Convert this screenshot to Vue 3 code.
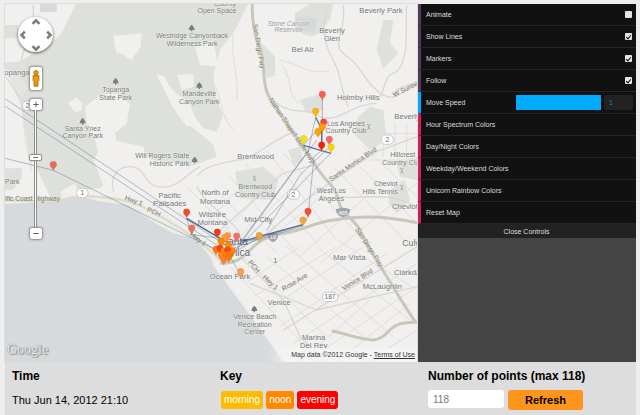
<script setup>
import { ref } from 'vue'

const zoom = ref(12)
const speed = ref(1)
const points = ref('')

const toggles = ref([
  { id: 'animate', label: 'Animate', on: false },
  { id: 'lines', label: 'Show Lines', on: true },
  { id: 'markers', label: 'Markers', on: true },
  { id: 'follow', label: 'Follow', on: true },
])
const actions = [
  'Hour Spectrum Colors',
  'Day/Night Colors',
  'Weekday/Weekend Colors',
  'Unicorn Rainbow Colors',
  'Reset Map',
]
const pans = [
  { dir: 'up', turn: 'M3 8 L7 4 L11 8' },
  { dir: 'left', turn: 'M8 3 L4 7 L8 11' },
  { dir: 'right', turn: 'M6 3 L10 7 L6 11' },
  { dir: 'down', turn: 'M3 6 L7 10 L11 6' },
]
const keys = ['morning', 'noon', 'evening']

const labels = [
  { x: 675, y: 18, lines: ['County'], k: 'park' },
  { x: 651, y: 40, lines: ['Open Space'], k: 'park' },
  { x: 576, y: 114, lines: ['Westridge Canyonback', 'Wilderness Park'], k: 'park' },
  { x: 347, y: 276, lines: ['Topanga', 'State Park'], k: 'park' },
  { x: 598, y: 288, lines: ['Mandeville', 'Canyon Park'], k: 'park' },
  { x: 248, y: 392, lines: ['Santa Ynez', 'Canyon Park'], k: 'park' },
  { x: 568, y: 474, lines: ['Will Rogers State', 'Historic Park'], k: 'park', a: 'end' },
  { x: 15, y: 553, lines: ['Park'], k: 'park', a: 'start' },
  { x: 13, y: 225, lines: ['opanga'], k: 'town', a: 'start' },
  { x: 866, y: 77, lines: ['Stone Canyon', 'Reservoir'], k: 'water-name' },
  { x: 1143, y: 38, lines: ['Beverly Park'], k: 'town' },
  { x: 996, y: 98, lines: ['Beverly', 'Glen'], k: 'town' },
  { x: 908, y: 156, lines: ['Bel Air'], k: 'town' },
  { x: 1075, y: 300, lines: ['Holmby Hills'], k: 'town' },
  { x: 1183, y: 357, lines: ['Beverly Hills'], k: 'town', a: 'start' },
  { x: 1038, y: 377, lines: ['Los Angeles', 'Country Club'], k: 'park' },
  { x: 767, y: 476, lines: ['Brentwood'], k: 'town' },
  { x: 766, y: 567, lines: ['Brentwood', 'Country Club'], k: 'park' },
  { x: 1208, y: 471, lines: ['Hillcrest', 'Country Club'], k: 'park' },
  { x: 1193, y: 558, lines: ['Cheviot', 'Hills Tennis'], k: 'park', a: 'end' },
  { x: 994, y: 580, lines: ['West Los', 'Angeles'], k: 'park' },
  { x: 1176, y: 628, lines: ['Cheviot Hills'], k: 'town', a: 'start' },
  { x: 645, y: 586, lines: ['North of', 'Montana'], k: 'town' },
  { x: 637, y: 650, lines: ['Wilshire', 'Montana'], k: 'town' },
  { x: 509, y: 594, lines: ['Pacific', 'Palisades'], k: 'town' },
  { x: 775, y: 667, lines: ['Mid-City'], k: 'town' },
  { x: 690, y: 838, lines: ['Ocean Park'], k: 'town' },
  { x: 1048, y: 780, lines: ['Mar Vista'], k: 'town' },
  { x: 1207, y: 738, lines: ['Culver City'], k: 'city', a: 'start' },
  { x: 1182, y: 824, lines: ['Clarkdale'], k: 'town', a: 'start' },
  { x: 1147, y: 867, lines: ['McLaughlin'], k: 'town' },
  { x: 837, y: 916, lines: ['Venice'], k: 'town' },
  { x: 764, y: 957, lines: ['Venice Beach', 'Recreation', 'Center'], k: 'park' },
  { x: 941, y: 1019, lines: ['Marina', 'Del Rey'], k: 'town' },
  { x: 704, y: 735, lines: ['Santa'], k: 'metro' },
  { x: 702, y: 768, lines: ['Monica'], k: 'metro' },
]
const step = { park: 23, town: 25, 'water-name': 20 }

const streets = [
  { x: 770, y: 140, r: 80, t: 'San Diego Fwy' },
  { x: 870, y: 395, r: 56, t: 'Nathan Shapell Mem Hwy' },
  { x: 1062, y: 498, r: -34, t: 'Santa Monica Blvd' },
  { x: 1102, y: 745, r: 57, t: 'San Diego Fwy' },
  { x: 1076, y: 844, r: -33, t: 'Venice Blvd' },
  { x: 887, y: 852, r: -31, t: 'Rose Ave' },
  { x: 757, y: 804, r: 50, t: 'PCH' },
  { x: 807, y: 852, r: 42, t: 'Hwy 1' },
  { x: 399, y: 608, r: 20, t: 'Hwy 1' },
  { x: 459, y: 642, r: 24, t: 'PCH' },
  { x: 590, y: 722, r: 38, t: 'Hwy 1' },
  { x: 93, y: 603, r: 0, t: 'cific Coast Highway' },
  { x: 1222, y: 272, r: -27, t: 'W Sunset' },
]

const trees = [[575, 84], [347, 244], [598, 257], [248, 364], [584, 480], [763, 927]]
const golf = [[1106, 379], [763, 534], [1205, 511], [1205, 562]]
const shields = [
  { x: 247, y: 579, w: 34, t: '1' },
  { x: 82, y: 317, w: 28, t: '2' },
  { x: 1162, y: 419, w: 36, t: '2' },
  { x: 880, y: 583, w: 36, t: '2' },
  { x: 990, y: 891, w: 46, t: '187' },
]

const tracks = [
  'M15 296 L655 722', 'M15 318 L650 735', 'M15 475 L160 511 L650 750',
  'M560 655 L665 718', 'M560 655 L575 704 L655 714', 'M575 704 L660 760',
  'M690 740 L909 674 L924 652', 'M700 745 L778 718 L909 678',
  'M700 760 L950 420', 'M708 750 L990 462', 'M715 735 L925 452 L947 352',
  'M924 652 L942 470 L965 452', 'M800 692 L900 525 L990 440', 'M690 770 L722 826',
  'M967 290 L967 375 L965 450', 'M680 725 L778 718', 'M705 755 L800 700', 'M911 435 L970 370',
]
const boldTracks = ['M911 436 L993 460', 'M947 352 L967 390 L953 405', 'M965 445 L965 385', 'M560 655 L665 718', 'M725 724 L909 674']

const pins = [
  { x: 160, y: 495, c: '#e86a5c' }, { x: 967, y: 284, c: '#ff5a55' },
  { x: 947, y: 335, c: '#f7b90c' }, { x: 971, y: 367, c: '#f4473b' },
  { x: 967, y: 381, c: '#ff9a00' }, { x: 954, y: 396, c: '#f9a406' },
  { x: 911, y: 417, c: '#f3e017' }, { x: 988, y: 419, c: '#f36b69' },
  { x: 965, y: 436, c: '#ff1a0c' }, { x: 993, y: 442, c: '#fbd400' },
  { x: 560, y: 637, c: '#f8462c' }, { x: 575, y: 685, c: '#f56b59' },
  { x: 924, y: 635, c: '#f44b32' }, { x: 909, y: 661, c: '#f2a53a' },
  { x: 778, y: 708, c: '#f3a23c' }, { x: 710, y: 709, c: '#f86e66' },
  { x: 683, y: 708, c: '#ff9c45' }, { x: 675, y: 713, c: '#ff9a3c' },
  { x: 652, y: 697, c: '#fa3512' }, { x: 722, y: 816, c: '#f99c50' },
  { x: 663, y: 724, c: '#fa8500' }, { x: 685, y: 736, c: '#ff8a00' },
  { x: 648, y: 749, c: '#ff7417' }, { x: 660, y: 745, c: '#fb4410' },
  { x: 697, y: 753, c: '#ff8517' }, { x: 671, y: 754, c: '#ff8c08' },
  { x: 683, y: 751, c: '#f84a10' }, { x: 690, y: 764, c: '#ff7a08' },
  { x: 664, y: 766, c: '#ff8420' }, { x: 678, y: 767, c: '#ff7d0d' },
  { x: 671, y: 779, c: '#ff8030' }, { x: 686, y: 771, c: '#f9790d' },
]

const minorRoads = [
  'M600 600 L760 770 M640 560 L830 760 M690 530 L900 770 M735 490 L960 740 M800 450 L1010 720 M850 460 L1090 720',
  'M560 560 L640 640 M1000 500 L1251 760 M1050 470 L1251 670 M1090 440 L1251 590',
  'M610 680 L735 545 M650 720 L850 510 M720 710 L880 560 M750 750 L960 560 M830 700 L1000 560 M900 770 L1130 560 M960 790 L1251 550',
  'M690 800 L960 1086 M730 770 L980 1010 M800 770 L1090 1010 M860 740 L1180 1010 M950 740 L1230 960 M1010 720 L1251 870',
  'M735 850 L900 740 M760 890 L1010 740 M800 930 L1090 740 M840 980 L1160 760 M880 1030 L1251 790 M970 1050 L1251 860',
  'M900 1086 L1110 900 M1010 1086 L1230 910 M1100 1086 L1251 990',
  'M1130 400 L1251 400 M1150 380 V470 M1185 370 V470 M1220 370 V460 M1110 480 L1251 480',
  'M640 250 C670 300 660 350 700 390 M700 100 C690 180 720 230 710 300 M850 200 C880 250 860 290 900 310 M840 180 C900 190 930 230 990 210',
]
const majorRoads = [
  'M985 15 C960 90 975 140 1000 180 C1030 240 1020 270 1045 320',
  'M1030 15 C1040 100 990 130 1035 165 C1080 190 1090 240 1130 270 C1180 320 1210 270 1251 250',
  'M1220 15 C1215 100 1230 170 1190 215 C1150 225 1160 260 1135 300',
  'M820 300 C870 350 910 320 950 345 C1010 380 1050 310 1130 310',
  'M590 530 C620 490 680 490 710 480 C760 480 800 430 870 400',
  'M730 770 C900 600 1000 540 1130 455 L1251 410',
  'M650 700 L850 520 L960 490 M590 560 C620 620 690 650 720 700',
  'M720 770 L850 900 L900 1010 L980 1086',
  'M750 850 L950 930 L1251 860 M850 990 L1251 740',
  'M1020 590 C1100 600 1150 570 1251 620',
  'M340 575 C330 530 350 500 390 500 C440 500 430 560 480 560 C530 570 560 520 600 500',
  'M100 15 L100 60 M62 185 L100 60 M15 230 C40 250 45 290 80 310',
]
</script>

<template>
  <div class="page">
    <main class="stage">
      <section class="map" aria-label="Map">
        <svg class="canvas" viewBox="15 12 1236 1074" preserveAspectRatio="xMidYMid slice">
          <rect x="-900" y="-900" width="3000" height="3000" class="land" />
          <path class="green" d="M227 12 L205 60 L180 108 L60 185 L15 188 L15 205 L58 235 L85 265 L60 300 L78 400 L90 460 L110 505 L150 590 L185 598 L200 575 L300 565 L330 540 L300 480 L285 420 L260 370 L255 320 L300 285 L345 280 L390 310 L380 370 L345 400 L350 425 L420 440 L455 480 L540 490 L570 500 L650 470 L640 435 L600 400 L560 370 L525 330 L500 280 L470 225 L520 270 L570 330 L610 385 L650 395 L670 345 L650 300 L640 230 L660 150 L700 100 L745 12 Z" />
          <path class="green" d="M15 188 L60 185 L90 170 L110 300 L95 520 L75 430 L65 330 Z" opacity=".7" />
          <path class="green" d="M930 12 L1000 12 L990 60 L950 105 L930 110 L885 90 L885 40 Z M775 120 L825 170 L825 225 L800 235 Z M1150 60 L1180 60 L1170 130 L1195 160 L1150 205 L1130 150 Z M1110 320 L1150 330 L1160 420 L1110 450 L1060 400 L1075 350 Z M705 515 L790 500 L835 540 L820 600 L720 595 Z M1190 490 L1251 470 L1251 540 L1200 530 Z M1170 570 L1215 540 L1230 600 L1190 640 L1165 610 Z M900 300 L965 280 L970 330 L920 340 Z M15 75 L55 75 L55 115 L15 115 Z M15 505 L65 505 L65 535 L40 570 L15 570 Z M865 450 L900 440 L910 480 L880 500 Z" />
          <path class="grey" d="M120 12 L170 12 L170 36 L120 36 Z M885 50 L950 55 L945 100 L885 88 Z" />
          <path class="land" d="M340 108 L425 100 L422 140 L395 180 L370 165 L348 155 Z M470 223 L492 228 L515 270 L570 310 L590 370 L560 380 L520 325 Z M532 225 L580 222 L582 260 L545 270 Z M205 310 L228 292 L248 310 L245 330 L225 338 Z M585 140 L640 120 L655 200 L600 195 Z M320 415 L430 440 L440 490 L540 520 L560 560 L600 600 L480 610 L320 580 L280 480 Z M180 575 L225 550 L240 595 L190 595 Z" />
          <path class="sand" d="M15 588 L170 600 L195 580 L260 585 L340 590 L420 605 L490 640 L560 690 L640 750 L660 790 L640 790 L500 700 L370 620 L210 605 L15 620 Z" />
          <path class="water" d="M-900 612 L15 612 L160 606 L240 588 L290 603 L385 615 L470 672 L520 700 L585 715 L630 770 L645 800 L680 840 L735 920 L790 995 L850 1086 L850 2000 L-900 2000 Z" />
          <path class="shore" d="M640 790 L740 925 L855 1086" />

          <path v-for="d in minorRoads" :key="d" :d="d" class="road minor" />
          <path v-for="d in majorRoads" :key="d" :d="d" class="road major" />
          <path class="road freeway" d="M757 12 C755 60 762 100 780 145 C800 210 780 260 820 310 C860 370 900 430 938 480 C965 540 1005 550 1015 600 C1030 660 1060 640 1090 710 C1130 790 1170 840 1200 895 L1245 965" />
          <path class="road freeway" d="M660 790 C760 790 730 720 850 700 C920 690 930 670 1000 660 C1080 645 1170 650 1251 668" />
          <path class="road freeway" d="M995 993 C1040 1000 1060 1015 1120 1020 C1180 1010 1150 965 1251 967" />
          <path class="road coast" d="M15 600 L160 606 L240 588 C370 590 420 610 500 660 C570 700 620 740 660 780" />
          <path class="road coast" d="M1180 285 C1195 255 1220 265 1251 245" />

          <g class="markers-park">
            <g v-for="([x, y], i) in trees" :key="i" :transform="`translate(${x} ${y})`">
              <path d="M0 -10 C6 -6 8 1 9 6 L2 6 L2 10 L-2 10 L-2 6 L-9 6 C-8 1 -6 -6 0 -10Z" />
            </g>
            <g v-for="([x, y], i) in golf" :key="'g' + i" :transform="`translate(${x} ${y})`">
              <path class="golfer" d="M-5 -7 L1 -2 L-2 9 M1 -2 L5 -7 M0 2 L5 9" />
            </g>
          </g>

          <text
            v-for="s in streets"
            :key="s.x"
            class="street"
            text-anchor="middle"
            :transform="`translate(${s.x} ${s.y}) rotate(${s.r})`"
          >{{ s.t }}</text>

          <text v-for="l in labels" :key="l.x + '-' + l.y" :class="['name', l.k]" :text-anchor="l.a || 'middle'">
            <tspan v-for="(line, i) in l.lines" :key="line" :x="l.x" :y="l.y + i * step[l.k] || l.y">{{ line }}</tspan>
          </text>
          <text x="826" y="790" class="name town" text-anchor="middle">1</text>

          <g v-for="s in shields" :key="s.x" class="shield">
            <rect :x="s.x - s.w / 2" :y="s.y - 14" :width="s.w" height="28" rx="13" />
            <text :x="s.x" :y="s.y + 7" text-anchor="middle">{{ s.t }}</text>
          </g>
          <g class="interstate">
            <path d="M1008 628 Q1029 618 1050 628 Q1052 645 1029 652 Q1006 645 1008 628Z" />
            <text x="1029" y="644" text-anchor="middle">405</text>
            <path d="M804 703 Q819 694 834 703 Q836 720 819 727 Q802 720 804 703Z" />
            <text x="819" y="718" text-anchor="middle">10</text>
          </g>

          <path v-for="(d, i) in tracks" :key="'t' + i" :d="d" class="track" />
          <path v-for="(d, i) in boldTracks" :key="'b' + i" :d="d" class="track bold" />
          <path
            v-for="(p, i) in pins"
            :key="'p' + i"
            class="pin"
            :fill="p.c"
            :transform="`translate(${p.x} ${p.y})`"
            d="M0 18 C-1 9 -10 7 -10 -1 A10 10 0 1 1 10 -1 C10 7 1 9 0 18Z"
          />
        </svg>

        <div class="nav">
          <div class="pan">
            <button v-for="p in pans" :key="p.dir" type="button" :class="p.dir" :aria-label="'Pan ' + p.dir">
              <svg viewBox="0 0 14 14"><path :d="p.turn" /></svg>
            </button>
          </div>
          <button type="button" class="pegman" aria-label="Street View">
            <svg viewBox="0 0 12 24">
              <circle cx="6" cy="6" r="2.300" />
              <path d="M3 9 H9 L9 14 L8 15 V20 H4 V15 L3 14Z" />
            </svg>
          </button>
          <button type="button" class="zoom" aria-label="Zoom in">
            <svg viewBox="0 0 12 12"><path d="M3 6H9M6 3V9" /></svg>
          </button>
          <input v-model="zoom" class="zoom-level" type="range" min="0" max="20" aria-label="Zoom level" />
          <button type="button" class="zoom" aria-label="Zoom out">
            <svg viewBox="0 0 12 12"><path d="M3 6H9" /></svg>
          </button>
        </div>

        <span class="google">Google</span>
        <p class="credit">Map data ©2012 Google - <a href="#terms">Terms of Use</a></p>
      </section>

      <aside class="panel">
        <div v-for="t in toggles" :key="t.id" class="row toggle">
          <label :for="t.id">{{ t.label }}</label>
          <input :id="t.id" v-model="t.on" type="checkbox" />
        </div>
        <div class="row speed">
          <label for="speed">Move Speed</label>
          <input id="speed" v-model="speed" type="range" min="0" max="1" step="0.1" />
          <input v-model="speed" class="value" type="text" aria-label="Move Speed value" />
        </div>
        <button v-for="a in actions" :key="a" type="button" class="row action">{{ a }}</button>
        <button type="button" class="close">Close Controls</button>
      </aside>
    </main>

    <footer class="info">
      <section>
        <h2>Time</h2>
        <p class="time">Thu Jun 14, 2012 21:10</p>
      </section>
      <section>
        <h2>Key</h2>
        <div class="keys">
          <span v-for="k in keys" :key="k" :class="['badge', k]">{{ k }}</span>
        </div>
      </section>
      <section>
        <h2><label for="points">Number of points (max 118)</label></h2>
        <form class="points" @submit.prevent>
          <input id="points" v-model="points" type="text" placeholder="118" />
          <button type="submit">Refresh</button>
        </form>
      </section>
    </footer>
  </div>
</template>

<style>
body {
  margin: 0;
  background: #eee;
}
</style>

<style scoped>
.page {
  box-sizing: border-box;
  min-height: 100vh;
  padding: 4px 4px 0 5px;
  display: flex;
  flex-direction: column;
  font-family: "Liberation Sans", Arial, sans-serif;
  color: #000;
}
button,
input {
  font-family: inherit;
  margin: 0;
  padding: 0;
  border: 0;
  box-sizing: border-box;
}
.stage {
  flex: 1;
  display: grid;
  grid-template-columns: minmax(0, 1fr) 219px;
}

/* map */
.map {
  position: relative;
  overflow: hidden;
  min-height: 260px;
  box-shadow: 0 0 0 1px #ddd;
}
.canvas {
  position: absolute;
  inset: 0;
  width: 100%;
  height: 100%;
}
.land { fill: #f1f0ee; }
.green { fill: #dde0db; }
.grey { fill: #d7dad9; }
.sand { fill: #efeee6; }
.water { fill: #d6dadd; }
.shore { fill: none; stroke: #eeeeea; stroke-width: 8; }
.road { fill: none; stroke-linejoin: round; }
.minor { stroke: #dfdedb; stroke-width: 3; }
.major { stroke: #d8d7d2; stroke-width: 4; }
.freeway { stroke: #c8c7b9; stroke-width: 9; }
.coast { stroke: #dddbcd; stroke-width: 7; }
.name {
  fill: #74777a;
  stroke: #f6f6f4;
  stroke-width: 2;
  paint-order: stroke;
}
.park { font-size: 21px; fill: #737874; }
.town { font-size: 23px; }
.city { font-size: 26px; }
.metro { font-size: 30px; fill: #66686a; }
.water-name { font-size: 20px; font-style: italic; fill: #979da2; }
.street {
  font-size: 20px;
  fill: #7d786b;
  stroke: #e6e5dd;
  stroke-width: 2;
  paint-order: stroke;
}
.markers-park { fill: #7a7f7c; }
.golfer { fill: none; stroke: #8a8e8b; stroke-width: 2; }
.shield rect { fill: #fff; stroke: #b3b3b3; stroke-width: 2; }
.shield text { font-size: 20px; fill: #666; }
.interstate path { fill: #a0a4aa; }
.interstate text { font-size: 17px; font-weight: bold; fill: #eee; }
.track { fill: none; stroke: #4b5f87; stroke-opacity: .6; stroke-width: 2; }
.track.bold { stroke: #2c4a80; stroke-opacity: .75; stroke-width: 4; }
.pin { stroke: #7a4a20; stroke-opacity: .3; stroke-width: 1; }

.nav {
  position: absolute;
  top: 13px;
  left: 13px;
  width: 35px;
  display: flex;
  flex-direction: column;
  align-items: center;
}
.pan {
  width: 35px;
  height: 35px;
  border-radius: 50%;
  background: #fff;
  box-shadow: 0 1px 3px #555;
  display: grid;
  grid-template: repeat(3, 1fr) / repeat(3, 1fr);
  grid-template-areas: ". up ." "left . right" ". down .";
}
.pan button { background: none; display: grid; place-items: center; }
.pan svg { width: 12px; height: 12px; fill: none; stroke: #7c7c7c; stroke-width: 3; }
.up { grid-area: up; }
.left { grid-area: left; }
.right { grid-area: right; }
.down { grid-area: down; }
.pegman,
.zoom {
  width: 12px;
  display: block;
  background: #fff;
  border-radius: 2px;
  box-shadow: 0 0 2px 1px #8b8b8b;
}
.pegman { height: 23px; margin: 15px 0 9px; }
.pegman svg { display: block; width: 12px; height: 23px; fill: #eb9a0c; stroke: #b06f08; stroke-width: 1; }
.zoom { height: 11px; flex: none; }
.zoom svg { display: block; width: 12px; height: 11px; stroke: #555; stroke-width: 1; }
.zoom-level {
  appearance: none;
  writing-mode: vertical-lr;
  direction: rtl;
  width: 11px;
  height: 118px;
  background: linear-gradient(90deg, transparent 4px, #8f8f8f 4px 5px, #fff 5px 6px, #8f8f8f 6px 7px, transparent 7px);
}
.zoom-level::-webkit-slider-thumb {
  appearance: none;
  width: 11px;
  height: 5px;
  border-radius: 1px;
  background: linear-gradient(#777, #777) center / 5px 1px no-repeat #fff;
  box-shadow: 0 0 1px 1px #8b8b8b;
}
.google {
  position: absolute;
  left: 2px;
  bottom: 3px;
  font: 14px/18px "Liberation Serif", serif;
  color: #e9ecee;
  text-shadow: 0 0 1px #777, 1px 1px 1px #888;
}
.credit {
  position: absolute;
  right: 0;
  bottom: 0;
  margin: 0;
  padding: 0 2px 0 24px;
  font-size: 7px;
  line-height: 14px;
  color: #333;
  background: linear-gradient(90deg, transparent, #f5f5f5cc 24px);
}
.credit a { color: #333; }

/* control panel */
.panel {
  background: #444;
  display: flex;
  flex-direction: column;
}
.row {
  height: 22px;
  display: flex;
  align-items: center;
  padding: 0 3px 0 5px;
  border-left: 4px solid #51395f;
  border-bottom: 1px solid #252525;
  background: #111;
  color: #ddd;
  font-size: 7px;
  text-align: left;
  box-sizing: border-box;
}
.row label { flex: 1; }
.toggle input {
  appearance: none;
  width: 7px;
  height: 7px;
  margin-right: 1px;
  border-radius: 1px;
  background: #e6e6e6;
  display: grid;
  place-items: center;
}
.toggle input:checked::before {
  content: "";
  width: 2px;
  height: 4px;
  border: solid #111;
  border-width: 0 1px 1px 0;
  transform: rotate(40deg);
}
.speed { border-left-color: #00aaff; gap: 3px; }
.speed input { height: 15px; }
.speed input[type="range"] {
  appearance: none;
  width: 85px;
  background: #00aaff;
}
.speed input[type="range"]::-webkit-slider-thumb {
  appearance: none;
  width: 1px;
  height: 15px;
  background: #00aaff;
}
.speed .value {
  width: 29px;
  padding: 0 5px;
  border-radius: 2px;
  background: #222;
  color: #1587bd;
  font-size: 7px;
}
.action { border-left-color: #d01f5c; cursor: pointer; }
.close {
  height: 14px;
  background: #222;
  color: #ddd;
  font-size: 7px;
}

/* footer */
.info {
  display: grid;
  grid-template-columns: repeat(3, 1fr);
  padding: 7px 0 5px 7px;
  background: #ddd;
}
h2 {
  margin: 0 0 6px;
  font-size: 12px;
  line-height: 15px;
}
.time {
  margin: 0;
  font-size: 11px;
  line-height: 20px;
}
.keys { display: flex; gap: 3px; padding: 1px; }
.badge {
  padding: 0 3px;
  border-radius: 3px;
  color: #fff;
  font-size: 10px;
  line-height: 18px;
}
.morning { background: #ffbb00; }
.noon { background: #ff8800; }
.evening { background: #ff0000; }
.points { display: flex; align-items: flex-start; gap: 4px; }
.points input {
  width: 76px;
  height: 18px;
  padding: 0 5px;
  border-radius: 3px;
  background: #fff;
  font-size: 10px;
}
.points input::placeholder { color: #777; }
.points button {
  width: 75px;
  height: 20px;
  border-radius: 3px;
  background: #ff951c;
  font-size: 11px;
  font-weight: bold;
}
</style>
